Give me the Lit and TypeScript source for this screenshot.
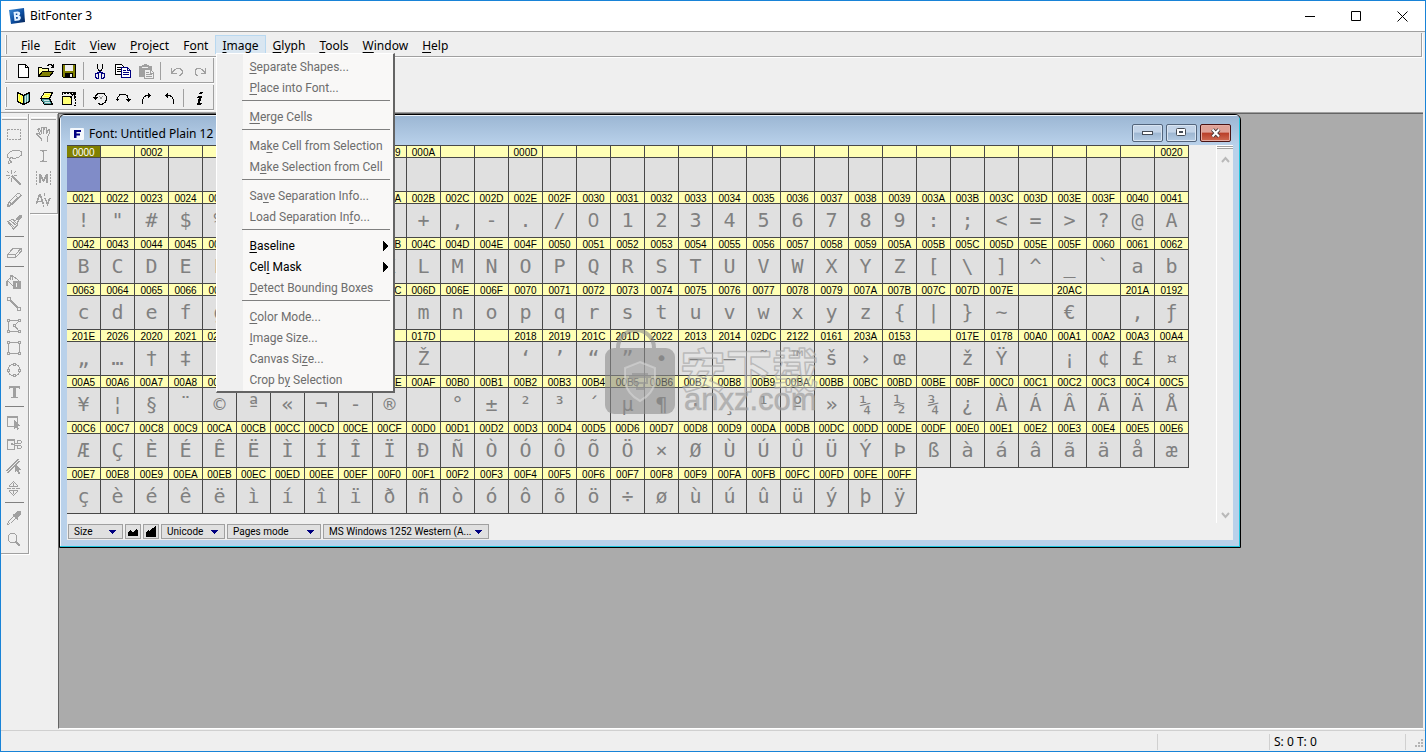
import { LitElement, html, svg, css, nothing } from "lit";
import { customElement } from "lit/decorators.js";
import { classMap } from "lit/directives/class-map.js";

/* "&" marks the mnemonic letter that follows it */
const mnemonic = (label: string) => {
  const i = label.indexOf("&");
  return i < 0 ? label : html`${label.slice(0, i)}<u>${label[i + 1]}</u>${label.slice(i + 2)}`;
};
const plain = (label: string) => label.replace("&", "");

const hex = (n: number) => n.toString(16).toUpperCase().padStart(4, "0");
const range = (from: number, to: number) =>
  Array.from({ length: to - from + 1 }, (_, i) => hex(from + i));
const row = (text: string) => text.split(",");

const ROWS: string[][] = [
  row("0000,,0002,,,,,,,0009,000A,,,000D,,,,,,,,,,,,,,,,,,,0020"),
  range(0x21, 0x41),
  range(0x42, 0x62),
  [...range(0x63, 0x7e), "", "20AC", "", "201A", "0192"],
  row("201E,2026,2020,2021,02C6,2030,0160,2039,0152,,017D,,,2018,2019,201C,201D,2022,2013,2014,02DC,2122,0161,203A,0153,,017E,0178,00A0,00A1,00A2,00A3,00A4"),
  range(0xa5, 0xc5),
  range(0xc6, 0xe6),
  range(0xe7, 0xff),
];

const glyphOf = (code: string) => {
  const n = parseInt(code || "0", 16);
  if (n <= 0x20 || n === 0xa0 || n === 0xaf) return "";
  return n === 0xad ? "-" : String.fromCharCode(n);
};

type Icon = ReturnType<typeof svg>;
const icons: Record<string, Icon> = {
  New: svg`<path d="M3.5 1.5h7l3 3v10h-10z" fill="#fff" stroke="#000"/><path d="M10.5 1.5v3h3" fill="none" stroke="#000"/>`,
  Open: svg`<path d="M.5 13.5v-9h3l1 1h6v3" fill="#ffff9c" stroke="#000"/><path d="M.5 13.5l4-5h11l-4 5z" fill="#808000" stroke="#000"/><path d="M9 2.5h1l1-1h2l1 1 1 1M15.500 1v3h-3" fill="none" stroke="#000"/>`,
  Save: svg`<path d="M1.500 1.500h13v13h-12l-1-1z" fill="#808000" stroke="#000"/><path d="M4 2h8v6h-8z" fill="#efefef"/><path d="M4 10h8v5h-8z" fill="#000"/><path d="M9 11h2v3h-2z" fill="#efefef"/><path d="M1.500 1.500h13v13h-12l-1-1z" fill="none" stroke="#000"/>`,
  Cut: svg`<path d="M5.500 1v4l3 5M10.500 1v4l-3 5" fill="none" stroke="#000"/><path d="M7.500 9l-2 1h-1l-1 1v3l1 1h2v-5l1-2M8.500 9l2 1h1l1 1v3l-1 1h-2v-5l-1-2" fill="none" stroke="#000080"/>`,
  Copy: svg`<path d="M.5 1.500h6l3 3v7h-9z" fill="#fff" stroke="#000"/><path d="M2 4.500h4M2 6.500h5M2 8.500h4" stroke="#000"/><path d="M6.500 4.500h6l3 3v7h-9z" fill="#fff" stroke="#000080"/><path d="M12.500 4.500v3h3M8 7.500h3M8 9.500h6M8 11.500h6" stroke="#000080" fill="none"/>`,
  Paste: svg`<path d="M1 3h3v-1h2v-1h3v1h2v1h3v11h-13z" fill="#a0a0a0"/><path d="M4 4.500h6" stroke="#efefef"/><path d="M6.500 6.500h6l3 3v6h-9z" fill="#efefef" stroke="#a0a0a0"/><path d="M8 9.500h3M8 11.500h6M8 13.500h6M12.500 7v3h3" stroke="#a0a0a0" fill="none"/>`,
  Undo: svg`<path d="M2.500 5v5h5M3 9.500l3-3 2-1h3l2 2v3l-2 2h-1" fill="none" stroke="#a0a0a0"/>`,
  Redo: svg`<path d="M13.500 5v5h-5M13 9.500l-3-3-2-1h-3l-2 2v3l2 2h1" fill="none" stroke="#a0a0a0"/>`,
  "Flip horizontal": svg`<path d="M2.500 2.500l6 3v9l-6-3z" fill="#ffff8a" stroke="#000"/><path d="M14.500 2.500l-6 3v9l6-3z" fill="#52a0a0" stroke="#000"/><path d="M4.500 4v8M6.500 5v8" stroke="#ffff20"/><path d="M10.500 6v7M12.500 5v7" stroke="#cfe6e6"/>`,
  "Flip vertical": svg`<path d="M6.500 2.500h8l-3 6h-9z" fill="#ffff8a" stroke="#000"/><path d="M2.500 8.500h9l3 6h-8z" fill="#52a0a0" stroke="#000"/><path d="M7 4.500h5M6 6.500h5" stroke="#ffff20"/><path d="M6 10.500h5M7 12.500h5" stroke="#cfe6e6"/>`,
  Resize: svg`<path d="M1.500 5v-2h13v12h-3" fill="none" stroke="#000" stroke-dasharray="2 1"/><path d="M1.500 6.500h9v8h-9z" fill="#ffff73" stroke="#000"/><path d="M9 8l4-4M9.500 4.500h3.500v4" fill="none" stroke="#000"/><path d="M1 2h14v1h-14z" fill="#000"/>`,
  "Rotate by angle": svg`<path d="M3.500 8v-2l2-2 2-1h2l3 1 2 3v2l-1 3-3 2h-3l-1-1" fill="none" stroke="#000"/><path d="M1 7h5l-2.500 3z" fill="#000"/><path d="M7.500 6.500l3 3M10.500 6.500l-3 3" stroke="#999"/>`,
  "Rotate 180": svg`<path d="M2.500 10v-2l2-3 3-1h2l3 2 1 4" fill="none" stroke="#000"/><path d="M1 9h3l-1.500 2zM11 9h5l-2.500 3z" fill="#000"/>`,
  "Rotate right": svg`<path d="M4.500 13.500v-4l2-3 2-1h3" fill="none" stroke="#000"/><path d="M10 3l3 2.500-3 2.500z" fill="#000"/>`,
  "Rotate left": svg`<path d="M12.500 13.500v-4l-2-3-2-1h-3" fill="none" stroke="#000"/><path d="M7 3l-3 2.500 3 2.500z" fill="#000"/>`,
  Info: svg`<path d="M8 2h3l-1 2h-3zM6 6h4l-2 7h2l-1 1.500h-4l2-7h-2z" fill="#000"/>`,

  Marquee: svg`<path d="M1.500 3.500h13v10h-13z" fill="none" stroke="#a0a0a0" stroke-dasharray="2 1"/>`,
  Lasso: svg`<path d="M4.500 10.500l-3-1v-3l3-3 5-1.500h3l3 2v3l-3 2.500-5 1-2-1-2 1v2l2 1v1l-3 1v-2z" fill="none" stroke="#a0a0a0"/>`,
  "Magic wand": svg`<path d="M6 6l9 9" stroke="#a0a0a0" stroke-width="2.200"/><path d="M5.500 0v4M5.500 8v4M0 5.500h4M8 5.500h3M1.500 1.500l2 2M9.500 1.500l-2 2M1.500 9.500l2-2" stroke="#a0a0a0"/>`,
  Pencil: svg`<path d="M1.500 14.500l1.500-4.500 8.500-8.500h2l1.500 2-8.500 8.500zM9.500 3.500l3 3M3.500 10l2.500 2.500M5 12l6-6" fill="none" stroke="#a0a0a0"/><path d="M1 15v-3l3 3z" fill="#a0a0a0"/>`,
  Brush: svg`<path d="M1.500 7.500l5-2 3 1 4-5h2v2l-4 4.500v3l-4 4zM3 8l6 6M5 7l6 5M7 6l4 4" fill="none" stroke="#a0a0a0"/><path d="M10 5l4-4 2 2-4 4z" fill="#a0a0a0"/>`,
  Eraser: svg`<path d="M1.500 10.500l6-6.500h8v3l-6 6.500h-8zM1.500 10.500h8l6-6.500M9.500 10.500v3" fill="none" stroke="#a0a0a0"/>`,
  Fill: svg`<path d="M1.500 6.500l5-5 6 5-5 6zM4.500 6v-5h2v5" fill="none" stroke="#a0a0a0"/><path d="M7 7h8v8h-8z" fill="#a0a0a0"/><path d="M0 7h2v5h-2zM10 8h2v5h-2z" fill="#a0a0a0"/><path d="M10.500 9v4" stroke="#efefef"/>`,
  Line: svg`<path d="M3 3l10 10" stroke="#a0a0a0" stroke-width="1.800"/><path d="M1.500 1.500h3v3h-3zM11.500 11.500h3v3h-3z" fill="#efefef" stroke="#a0a0a0"/>`,
  Polygon: svg`<path d="M2.500 2.500h11l-5 5 5 6h-11z" fill="none" stroke="#a0a0a0"/><path d="M1.500 1.500h2v2h-2zM12.500 1.500h2v2h-2zM7.500 6.500h2v2h-2zM12.500 12.500h2v2h-2zM1.500 12.500h2v2h-2z" fill="#efefef" stroke="#a0a0a0"/>`,
  Rectangle: svg`<path d="M2.500 2.500h11v11h-11z" fill="none" stroke="#a0a0a0"/><path d="M1.500 1.500h2v2h-2zM12.500 1.500h2v2h-2zM12.500 12.500h2v2h-2zM1.500 12.500h2v2h-2z" fill="#efefef" stroke="#a0a0a0"/>`,
  Ellipse: svg`<circle cx="8" cy="8" r="6" fill="none" stroke="#a0a0a0"/><path d="M7.500 1.500h2v2h-2zM12.500 7.500h2v2h-2zM7.500 12.500h2v2h-2zM1.500 7.500h2v2h-2z" fill="#efefef" stroke="#a0a0a0"/>`,
  Text: svg`<path d="M3 2h11v3h-1l-1-1.500h-2v9l2 .5v1h-7v-1l2-.5v-9h-2l-1 1.500h-1z" fill="#a0a0a0"/>`,
  "Select area": svg`<path d="M1.500 2.500h10v10h-10z" fill="none" stroke="#a0a0a0"/><path d="M1 2h11v2h-11zM8 6l7 6-3 .5 1 2.500-1.500 1-1.500-3-2 2z" fill="#a0a0a0"/>`,
  "Cut cell": svg`<path d="M1.500 3.500h7v10h-7z" fill="none" stroke="#a0a0a0"/><path d="M1 3h8v2h-8z" fill="#a0a0a0"/><path d="M5 9l6-2M5 7l6 3M11.500 4.500h3l1 1v1l-1 1h-3zM11.500 9.500h3l1 1v1l-1 1h-3z" fill="none" stroke="#a0a0a0"/>`,
  "Edit line": svg`<path d="M1 13l11-12M2 15l11-12" stroke="#a0a0a0" stroke-width="1.500"/><path d="M9 5l6 7-2 .5 1 3h-2l-1-2.500-2 1.500z" fill="#a0a0a0"/>`,
  Spacing: svg`<path d="M3.500 5.500l4-4 4 4v1h-8zM3.500 10.500h8v1l-4 4-4-4zM1 8.500h4M10 8.500h4M7.500 3v3M7.500 10v4" fill="none" stroke="#a0a0a0"/><path d="M6 8.500h3" stroke="#a0a0a0"/>`,
  Eyedropper: svg`<path d="M1.500 14.500l1-3 6-6 2 2-6 6z" fill="none" stroke="#a0a0a0"/><path d="M7 4l2 0 2-2.500 3-.5 1 1-.5 3-2.500 2v2l-1 1-5-5z" fill="#a0a0a0"/>`,
  Zoom: svg`<circle cx="6.500" cy="6" r="4.500" fill="none" stroke="#a0a0a0"/><path d="M10 10l4 4" stroke="#a0a0a0" stroke-width="2"/>`,
  Hand: svg`<path d="M6.500 15v-2l-5-5v-1h2l2 2-3-6h1l1-.5 2 5v-6h2v6l1-6h2v6l2-4h1v3l-2 5v4" fill="none" stroke="#a0a0a0"/>`,
  Baseline: svg`<path d="M5 2.500h2l1 1 1-1h3M5 13.500h2l1-1 1 1h3M8.500 3v10" fill="none" stroke="#a0a0a0"/>`,
  Metrics: svg`<path d="M1.500 1v14M15.500 1v14" stroke="#a0a0a0" stroke-dasharray="2 1"/><path d="M4 13v-9h2l2.500 5 2.500-5h2v9h-2v-5l-2 4h-1l-2-4v5z" fill="#a0a0a0"/>`,
  Kerning: svg`<path d="M1.500 12l3-9h1l3 9M3 9.500h4" fill="none" stroke="#a0a0a0" stroke-width="1.600"/><path d="M10 6l2.500 6 2.500-6" fill="none" stroke="#a0a0a0" stroke-width="1.600"/><path d="M9.500 1v3M8.500 13v2" stroke="#a0a0a0"/>`,
};

const tool = (name: string, disabled = false) =>
  name === "|"
    ? html`<span class="sep"></span>`
    : html`<button class="tool" aria-label=${name} title=${name} ?disabled=${disabled}>
        <svg width="16" height="16" viewBox="0 0 16 16" shape-rendering="crispEdges" aria-hidden="true">${icons[name]}</svg>
      </button>`;

const toolStyles = css`
  button { border: 0; padding: 0; background: none; font: inherit; }
  .tool { display: grid; place-items: center; }
  svg { display: block; }
`;

@customElement("tool-bar")
class ToolBar extends LitElement {
  static properties = { tools: {}, off: {} };
  declare tools: string[];
  declare off: string[];
  static styles = [toolStyles, css`
    :host { display: flex; align-items: center; width: 205px; height: 24px; padding: 1px 0 0 3px;
      border: 1px solid #a0a0a0; border-width: 0 1px 1px 0; box-shadow: 0 1px #fff; margin: 0 0 2px 4px; }
    :host::before { content: ""; align-self: stretch; margin: 1px 4px 2px -3px;
      border-left: 1px solid #fff; border-right: 1px solid #a0a0a0; }
    .tool { width: 23px; height: 22px; }
    .sep { width: 1px; height: 18px; margin: 0 4px 0 3px; background: #a0a0a0; }
  `];
  render() {
    return this.tools.map((t) => tool(t, (this.off ?? []).includes(t)));
  }
}

@customElement("tool-palette")
class ToolPalette extends LitElement {
  static properties = { tools: {} };
  declare tools: string[];
  static styles = [toolStyles, css`
    :host { display: flex; flex-direction: column; width: 27px; padding: 3px 0 2px;
      border: 1px solid #a0a0a0; border-width: 0 1px 1px 0; box-shadow: 1px 1px #fff; }
    .grip { width: 25px; height: 1px; margin: 0 0 3px 1px; border-top: 1px solid #fff; border-bottom: 1px solid #a0a0a0; }
    .tool { width: 26px; height: 22px; }
    .sep { width: 19px; height: 1px; margin: 3px 0 4px 4px; background: #808080; }
  `];
  render() {
    return html`<span class="grip"></span>${this.tools.map((t) => tool(t, true))}`;
  }
}

@customElement("glyph-window")
class GlyphWindow extends LitElement {
  static styles = css`
    :host { display: block; box-sizing: border-box; border: 1px solid #000; border-radius: 6px 6px 0 0;
      font: 10px "Liberation Sans", Arial, sans-serif; color: #000; overflow: hidden; }
    .frame { padding: 0 6px 6px 7px; border: 1px solid #1fc4dc; border-width: 0 1px 1px 0;
      background: linear-gradient(#9bb6d3, #b9d1ea 30px); box-shadow: inset 1px 1px #f1f6fb; }
    header { display: flex; align-items: center; height: 30px; }
    .logo { width: 14px; height: 12px; margin: 8px 5px 0 3px; }
    h1 { flex: 1; margin: 8px 0 0; font: 12px/18px "Noto Sans", sans-serif; }
    .caption { display: flex; gap: 3px; margin-top: 5px; padding-right: 2px; }
    .caption button { display: grid; place-items: center; width: 31px; height: 18px; padding: 0; border: 1px solid #53657c;
      border-radius: 2px; background: linear-gradient(#c3d4e8 45%, #9db6d1 50%, #b4cbe3); box-shadow: inset 0 0 0 1px #d9e5f2; }
    .caption .close { border-color: #4a1414; background: linear-gradient(#dfa297 45%, #b93e28 50%, #cf6b52); box-shadow: inset 0 0 0 1px #e5aca2; }
    .body { display: grid; grid-template-columns: 1fr 17px; background: #efefef; }
    table { table-layout: fixed; width: 1122px; margin-bottom: 9px; border-spacing: 0; border-top: 1px solid #484848; }
    td { width: 34px; padding: 0; }
    .code { box-sizing: border-box; height: 12px; border: solid #484848; border-width: 0 1px 1px 0; background: #ffffb5;
      line-height: 13px; text-align: center; }
    .glyph { box-sizing: border-box; height: 34px; border: solid #484848; border-width: 0 1px 1px 0; background: #e0e0e0;
      color: #808080; font: 20px/33px "DejaVu Sans Mono", monospace; text-align: center; overflow: hidden; }
    .plain { font-family: "Noto Sans", sans-serif; line-height: 31px; }
    .on .code { background: #808000; color: #fff; }
    .on .glyph { background: #808cc8; }
    .scroll { display: flex; flex-direction: column; align-items: center; border-left: 1px solid #fff; }
    .split { width: 16px; height: 3px; margin-bottom: 7px; border: solid #a0a0a0; border-width: 0 0 1px; background: linear-gradient(#fff 1px, #a0a0a0 1px, #a0a0a0 2px, #fff 2px); }
    .up { margin-bottom: auto; }
    .down { margin-bottom: 4px; }
    .scroll svg { display: block; }
    footer { display: flex; gap: 2px; padding: 1px; background: #efefef; }
    .pick { display: grid; align-items: center; height: 15px; box-sizing: border-box; }
    .pick > * { grid-area: 1 / 1; }
    .pick svg { justify-self: end; margin-right: 7px; pointer-events: none; }
    select, .zoom { box-sizing: border-box; height: 15px; margin: 0; border: 1px solid #a0a0a0; border-radius: 0; background: #e0e0e0; color: #000; }
    select { appearance: none; width: 100%; padding: 0 5px; font: 10px/13px Roboto, sans-serif; }
    .zoom { width: 16px; padding: 0; display: grid; place-items: center; }
    .size { width: 55px; } .enc { width: 64px; } .mode { width: 94px; } .page { width: 166px; }
  `;
  render() {
    const pick = (cls: string, name: string, value: string) => html`<label class="pick ${cls}">
      <select aria-label=${name}><option>${value}</option></select>
      <svg width="7" height="4" shape-rendering="crispEdges"><path d="M0 0h7l-3.500 4z" fill="#000080"/></svg></label>`;
    const arrow = (cls: string, d: string) => html`<svg class=${cls} width="9" height="7"><path d=${d} fill="none" stroke="#b9b9b9" stroke-width="2"/></svg>`;
    return html`<div class="frame">
      <header>
        <svg class="logo" viewBox="0 0 14 12"><rect width="14" height="12" rx="1" fill="#f4f8fc"/><path d="M4 2h7v2H6.500v1.500H10v2H6.500V10H4z" fill="#000080"/></svg>
        <h1>Font: Untitled Plain 12</h1>
        <div class="caption">
          <button aria-label="Minimize"><svg width="12" height="6"><rect x=".5" y="1.500" width="10" height="3" fill="#fff" stroke="#444b55"/></svg></button>
          <button aria-label="Maximize"><svg width="11" height="9"><rect x=".5" y=".5" width="9" height="7" rx="1" fill="#fff" stroke="#444b55"/><rect x="3.500" y="3.500" width="3" height="1" fill="#9db6d1" stroke="#444b55"/></svg></button>
          <button class="close" aria-label="Close"><svg width="12" height="10"><path d="M2.500 1.500l6.500 7M9 1.500l-6.500 7" stroke="#443838" stroke-width="4"/><path d="M2.500 1.500l6.500 7M9 1.500l-6.500 7" stroke="#fff" stroke-width="2"/></svg></button>
        </div>
      </header>
      <div class="body">
        <table aria-label="Glyphs"><tbody>${ROWS.map((cells, r) => html`<tr>${cells.map((code, c) => html`<td class=${classMap({ on: r + c === 0 })}>
          <div class="code">${code}</div><div class=${classMap({ glyph: true, plain: code === "0030" })}>${glyphOf(code)}</div></td>`)}</tr>`)}</tbody></table>
        <div class="scroll"><span class="split"></span>${arrow("up", "M1 6l3.500-4L8 6")}${arrow("down", "M1 1l3.500 4L8 1")}</div>
      </div>
      <footer>
        ${pick("size", "Size", "Size")}
        <button class="zoom" aria-label="Smaller cells"><svg width="12" height="9" shape-rendering="crispEdges"><path d="M1 9v-4l2-2 2 2h1l3-3 2 2v5z"/></svg></button>
        <button class="zoom" aria-label="Larger cells"><svg width="12" height="12" shape-rendering="crispEdges"><path d="M1 11v-5l2-2 2 1 2-3 1 1 2-3h1v11z"/></svg></button>
        ${pick("enc", "Encoding", "Unicode")}
        ${pick("mode", "Display mode", "Pages mode")}
        ${pick("page", "Code page", "MS Windows 1252 Western (A...")}
      </footer>
    </div>`;
  }
}

const MENUS = ["&File", "&Edit", "&View", "&Project", "F&ont", "&Image", "&Glyph", "&Tools", "&Window", "&Help"];
const IMAGE_MENU = ["&Separate Shapes...", "&Place into Font...", "-", "&Merge Cells", "-", "Ma&ke Cell from Selection",
  "M&ake Selection from Cell", "-", "Sa&ve Separation Info...", "Load Separation In&fo...", "-", ">&Baseline", ">Cel&l Mask",
  "&Detect Bounding Boxes", "-", "&Color Mode...", "&Image Size...", "Canvas Si&ze...", "Crop b&y Selection"];

@customElement("app-root")
class AppRoot extends LitElement {
  static styles = css`
    :host { display: flex; flex-direction: column; box-sizing: border-box; height: 100vh; border: 1px solid #1883d7;
      background: #efefef; color: #000; font: 12px/16px "Noto Sans", sans-serif; }
    button { border: 0; padding: 0; background: none; color: inherit; font: inherit; }
    u { text-underline-offset: 2px; }
    .title { display: flex; align-items: center; height: 30px; padding-left: 8px; background: #fff; border-bottom: 1px solid #a0a0a0; }
    .title h1 { flex: 1; margin: 0 0 0 5px; font: 12px/16px "Noto Sans", sans-serif; }
    .title button { display: grid; place-items: center; width: 46px; height: 30px; }
    .bar { display: flex; height: 21px; margin: 1px 3px 0 0; padding: 2px 0 0 4px; border: solid #a0a0a0; border-width: 0 1px 1px 0;
      box-shadow: 1px 1px #fff; }
    .bar::before { content: ""; margin: 0 7px 2px 0; border-left: 1px solid #fff; border-right: 1px solid #a0a0a0; }
    .entry { position: relative; }
    .entry > button { box-sizing: border-box; height: 19px; padding: 1px 6px 0; border: 1px solid transparent; line-height: 17px; }
    .entry.open > button { border-color: #b8d8f0; background: #d9e6f1; }
    .menu { position: absolute; z-index: 2; left: 1px; top: 18px; box-sizing: border-box; width: 179px; padding: 2px 1px 1px;
      border: 1px solid #fff; border-right: 2px solid #646464; border-bottom: 2px solid #646464;
      background: linear-gradient(90deg, #efefef 26px, #f9f8f7 26px); font-family: Roboto, sans-serif; }
    .menu button { display: flex; justify-content: space-between; align-items: center; width: 100%; height: 21px; padding: 0 4px 0 31px; text-align: left; white-space: nowrap; }
    .menu button:disabled { color: #6d6d6d; }
    .menu hr { height: 1px; margin: 2px 2px 5px 24px; border: 0; background: #808080; }
    .bars { display: flex; flex-direction: column; height: 55px; padding-top: 1px; box-sizing: border-box; }
    .main { display: flex; flex: 1; min-height: 0; margin-right: 2px; border-top: 1px solid #a0a0a0; }
    .palettes { display: flex; align-items: flex-start; gap: 1px; width: 57px; padding-top: 1px; }
    .desk { position: relative; flex: 1; border: solid #646464; border-width: 1px 0 0 1px; background: #ababab; overflow: hidden; border-bottom: 1px solid #fff; }
    glyph-window { position: absolute; left: 0; top: 0; width: 1182px; }
    .mark { position: absolute; left: 540px; top: 216px; pointer-events: none; }
    .cjk { font: 700 46px "Noto Sans CJK SC", sans-serif; }
    .latin { font: 31px "Liberation Sans", sans-serif; }
    .status { display: flex; align-items: center; height: 19px; margin-top: 1px; padding-top: 1px; border-top: 1px solid #d0d0d0; }
    .status span { box-sizing: border-box; height: 16px; border-left: 1px solid #d0d0d0; padding-left: 4px; }
    .wide { flex: 1; } .status .wide { border: 0; }
    .hint { width: 112px; } .coords { width: 136px; } .grip { width: 20px; }
    .status svg { display: block; margin: 5px 0 0 5px; }
  `;

  renderItem(item: string) {
    if (item === "-") return html`<hr />`;
    const sub = item.startsWith(">");
    const label = sub ? item.slice(1) : item;
    return html`<button role="menuitem" ?disabled=${!sub}><span>${mnemonic(label)}</span>${sub
      ? html`<svg width="5" height="10" shape-rendering="crispEdges"><path d="M0 0l5 5-5 5z"/></svg>` : nothing}</button>`;
  }

  render() {
    return html`
      <div class="title">
        <svg width="16" height="17" viewBox="0 0 16 17"><defs><linearGradient id="b" x2="1" y2="1"><stop stop-color="#3f8fd8"/><stop offset=".55" stop-color="#0c4da0"/><stop offset="1" stop-color="#052050"/></linearGradient></defs>
          <path d="M0 2l15-2 1 14-14 2z" fill="url(#b)"/><path d="M4.500 4l4-.5c3-.2 3.500 3 1.500 4 2.500.5 2.500 4.500-.5 5l-4 .5z" fill="#e3f2ff"/><path d="M6.800 5.500h1.500v1.500h-1.500zM7 9h1.800v1.800H7z" fill="#0c4da0"/></svg>
        <h1>BitFonter 3</h1>
        <button aria-label="Minimize"><svg width="10" height="10"><path d="M0 5.500h10" stroke="#000"/></svg></button>
        <button aria-label="Maximize"><svg width="10" height="10"><path d="M.5.5h9v9h-9z" fill="none" stroke="#000"/></svg></button>
        <button aria-label="Close"><svg width="11" height="11"><path d="M.5.5l10 10M10.500.5l-10 10" stroke="#000"/></svg></button>
      </div>
      <nav class="bar">${MENUS.map((m) => {
        const open = plain(m) === "Image";
        return html`<div class=${classMap({ entry: true, open })}><button>${mnemonic(m)}</button>${open
          ? html`<div class="menu" role="menu">${IMAGE_MENU.map((i) => this.renderItem(i))}</div>` : nothing}</div>`;
      })}</nav>
      <div class="bars">
        <tool-bar .tools=${["New", "Open", "Save", "|", "Cut", "Copy", "Paste", "|", "Undo", "Redo"]} .off=${["Paste", "Undo", "Redo"]}></tool-bar>
        <tool-bar .tools=${["Flip horizontal", "Flip vertical", "Resize", "|", "Rotate by angle", "Rotate 180", "Rotate right", "Rotate left", "|", "Info"]}></tool-bar>
      </div>
      <div class="main">
        <div class="palettes">
          <tool-palette .tools=${["Marquee", "Lasso", "Magic wand", "Pencil", "Brush", "|", "Eraser", "|", "Fill", "Line", "Polygon", "Rectangle", "Ellipse", "Text", "|", "Select area", "Cut cell", "Edit line", "Spacing", "|", "Eyedropper", "Zoom"]}></tool-palette>
          <tool-palette .tools=${["Hand", "Baseline", "Metrics", "Kerning"]}></tool-palette>
        </div>
        <div class="desk">
          <glyph-window></glyph-window>
          <svg class="mark" width="230" height="90" viewBox="0 0 230 90">
            <path d="M19 18a18 18 0 0 1 36 0" fill="none" stroke="#8c8c8c" stroke-opacity=".6" stroke-width="4"/>
            <rect x="6" y="18" width="70" height="66" rx="9" fill="#8c8c8c" fill-opacity=".6"/>
            <path d="M41 32l15 6v14q-2 12-15 19q-13-7-15-19v-14z" fill="#c8c8c8" fill-opacity=".35" stroke="#ddd" stroke-opacity=".5" stroke-width="2"/>
            <path d="M34 44h14v9h-14zM30 47h22M38 53v6h7v-6" fill="none" stroke="#909090" stroke-opacity=".6" stroke-width="2"/>
            <text class="cjk" x="81" y="57" fill="#e8e8e8" fill-opacity=".4" stroke="#a0a0a0" stroke-opacity=".6" stroke-width="1.500" stroke-linejoin="round">安下载</text>
            <text class="latin" x="85" y="80" fill="#a0a0a0" fill-opacity=".7" stroke="#a0a0a0" stroke-opacity=".4">anxz.com</text>
          </svg>
        </div>
      </div>
      <div class="status"><span class="wide"></span><span class="hint"></span><span class="coords">S: 0 T: 0</span>
        <span class="grip"><svg width="11" height="10" shape-rendering="crispEdges"><path d="M6 0h2v2h-2zM3 3h2v2h-2zM6 3h2v2h-2zM0 6h2v2h-2zM3 6h2v2h-2zM6 6h2v2h-2z" fill="#b4b4b4"/></svg></span></div>`;
  }
}
